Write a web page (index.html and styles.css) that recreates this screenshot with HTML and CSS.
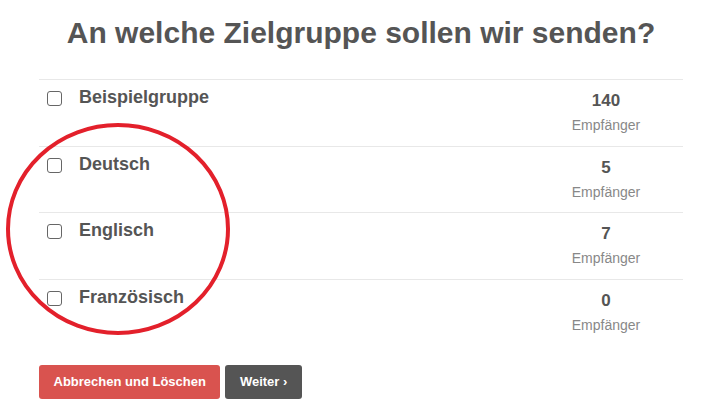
FILE: index.html
```html
<!DOCTYPE html>
<html lang="de">
  <head>
    <meta charset="UTF-8" />
    <title>Zielgruppe wählen</title>
    <link rel="stylesheet" href="styles.css">
  </head>
  <body>
    <div class="page">
      <h1>An welche Zielgruppe sollen wir senden?</h1>

      <div class="groups">
        <label class="group-row">
          <span class="check"><input type="checkbox" /></span>
          <span class="group-name">Beispielgruppe</span>
          <span class="group-count">
            <strong>140</strong>
            <small>Empfänger</small>
          </span>
        </label>
        <label class="group-row">
          <span class="check"><input type="checkbox" /></span>
          <span class="group-name">Deutsch</span>
          <span class="group-count">
            <strong>5</strong>
            <small>Empfänger</small>
          </span>
        </label>
        <label class="group-row">
          <span class="check"><input type="checkbox" /></span>
          <span class="group-name">Englisch</span>
          <span class="group-count">
            <strong>7</strong>
            <small>Empfänger</small>
          </span>
        </label>
        <label class="group-row">
          <span class="check"><input type="checkbox" /></span>
          <span class="group-name">Französisch</span>
          <span class="group-count">
            <strong>0</strong>
            <small>Empfänger</small>
          </span>
        </label>
      </div>

      <div class="actions">
        <button class="btn btn-danger">Abbrechen und Löschen</button>
        <button class="btn btn-dark">Weiter &rsaquo;</button>
      </div>
    </div>

    <!-- red marker drawn over the list -->
    <svg class="marker" width="234" height="220" viewBox="0 0 234 220">
      <ellipse cx="115" cy="107" rx="110" ry="104" fill="none" stroke="#e3202b" stroke-width="4" />
    </svg>
  </body>
</html>
```

FILE: styles.css
```css
body {
  font-family: "Liberation Sans", Arial, sans-serif;
  background-color: #fff;
  color: #555;
  margin: 0;
  padding: 0;
  position: relative;
}

.page {
  width: 644px;
  margin: 0 0 0 39px;
}

h1 {
  text-align: center;
  font-size: 30px;
  line-height: 34px;
  margin: 0;
  padding: 16px 0 29px;
  color: #555;
}

.groups {
  display: flex;
  flex-direction: column;
}

.group-row {
  display: flex;
  align-items: flex-start;
  box-sizing: border-box;
  height: 66.67px;
  border-top: 1px solid #e8e8e8;
}

.check {
  box-sizing: border-box;
  width: 40px;
  padding: 11px 0 0 8px;
}

.check input {
  appearance: none;
  -webkit-appearance: none;
  display: block;
  margin: 0;
  width: 15px;
  height: 15px;
  border: 1.5px solid #666;
  border-radius: 3px;
  background: #fff;
}

.group-name {
  flex: 1;
  font-size: 18px;
  font-weight: bold;
  line-height: 20px;
  padding-top: 7px;
}

.group-count {
  width: 154px;
  display: flex;
  flex-direction: column;
  align-items: center;
  padding-top: 11px;
}

.group-count strong {
  font-size: 17px;
  line-height: 20px;
}

.group-count small {
  font-size: 14px;
  line-height: 18px;
  margin-top: 5px;
  color: #888;
}

.actions {
  display: flex;
  gap: 5px;
  margin-top: 19px;
}

.btn {
  font-family: inherit;
  font-size: 13px;
  font-weight: bold;
  color: #fff;
  height: 34px;
  border: none;
  border-radius: 3px;
  padding: 0 14.5px;
  cursor: pointer;
}

.btn-danger {
  background-color: #d9534f;
}

.btn-dark {
  background-color: #555;
}

.marker {
  position: absolute;
  left: 3px;
  top: 122px;
}
```
